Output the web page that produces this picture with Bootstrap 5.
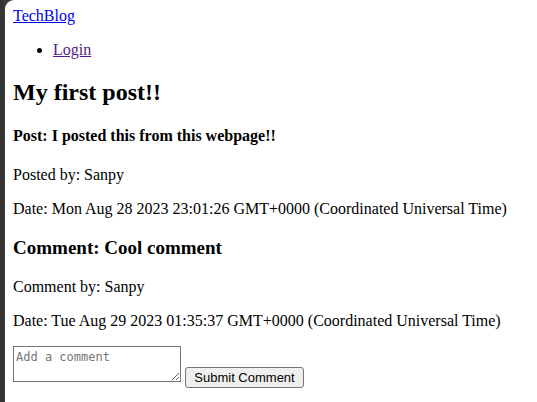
<!DOCTYPE html>
<html lang="en">
<head>
<meta charset="utf-8">
<meta name="viewport" content="width=device-width, initial-scale=1">
<title>TechBlog</title>
<link href="https://cdn.jsdelivr.net/npm/bootstrap@5.3.0/dist/css/bootstrap.min.css" rel="stylesheet">
<style>
  body { background: #403f40; color: #000; font: 16px/18px "Liberation Serif", "Times New Roman", serif; }
  .window-edge { border-left: 4px solid #353435; padding-left: 1px; }
  .page { background: #fff; border-top-left-radius: 9px; padding: 7px 8px; }
  .home-link { color: #0000ee; }
  .visited-link { color: #551a8b; }
  .menu { padding-left: 40px; }
  .page h2, .page h3, .page h4 { font-weight: 700; }
  .page h2 { font-size: 24px; line-height: 27px; margin: 20px 0; }
  .page h3 { font-size: 19px; line-height: 22px; margin: 19px 0; }
  .page h4 { font-size: 16px; line-height: 18px; margin: 21px 0; }
  .comment-box { width: 168px; height: 36px; padding: 2px; border: 1px solid #767676; color: #000; background: #fff; font: 12px/16px "DejaVu Sans Mono", monospace; }
  .comment-box::placeholder { color: #757575; }
  .submit-btn { min-width: 119px; height: 21px; margin-top: 21px; padding: 0 6px; border: 1px solid #767676; border-radius: 3px; background: #efefef; color: #000; font: 13px/18px "Liberation Sans", Arial, sans-serif; }
</style>
<script src="https://cdn.jsdelivr.net/npm/bootstrap@5.3.0/dist/js/bootstrap.bundle.min.js" defer></script>
</head>
<body>
<div class="window-edge d-flex min-vh-100">
  <div class="page flex-grow-1">
    <nav>
      <a class="home-link" href="#">TechBlog</a>
      <ul class="menu my-3">
        <li><a class="visited-link" href="#">Login</a></li>
      </ul>
    </nav>
    <main>
      <article>
        <h2>My first post!!</h2>
        <h4>Post: I posted this from this webpage!!</h4>
        <p class="mb-3">Posted by: Sanpy</p>
        <p class="mb-3">Date: Mon Aug 28 2023 23:01:26 GMT+0000 (Coordinated Universal Time)</p>
      </article>
      <section>
        <h3>Comment: Cool comment</h3>
        <p class="mb-3">Comment by: Sanpy</p>
        <p class="mb-3">Date: Tue Aug 29 2023 01:35:37 GMT+0000 (Coordinated Universal Time)</p>
      </section>
      <form class="d-flex flex-wrap align-items-start gap-1">
        <textarea class="comment-box" aria-label="Add a comment" placeholder="Add a comment"></textarea>
        <button class="submit-btn" type="button">Submit Comment</button>
      </form>
    </main>
  </div>
</div>
</body>
</html>
